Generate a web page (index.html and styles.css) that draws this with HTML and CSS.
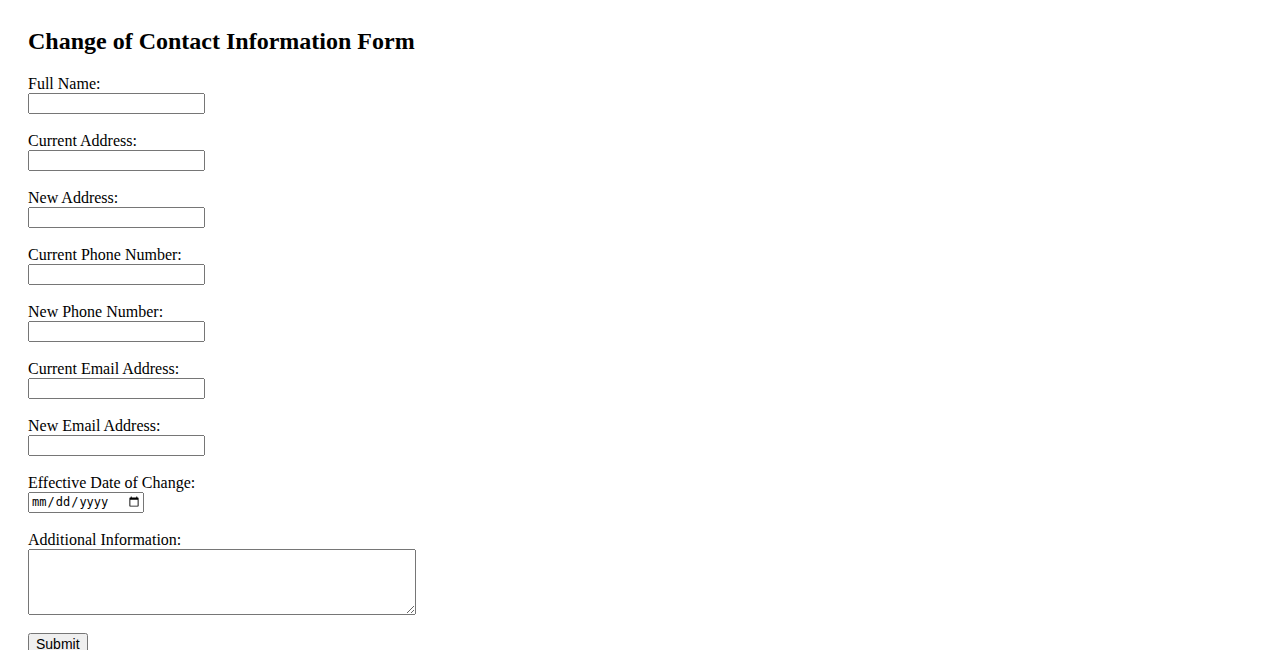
FILE: index.html
```html
<!DOCTYPE html>
<html lang="en">
<head>
    <title>Change of Contact Information Form</title>
    <link rel="stylesheet" href="styles.css">
</head>
<body>
    <h2>Change of Contact Information Form</h2>
    <form>
        <label for="fullName">Full Name:</label><br>
        <input type="text" id="fullName" name="fullName"><br><br>

        <label for="currentAddress">Current Address:</label><br>
        <input type="text" id="currentAddress" name="currentAddress"><br><br>

        <label for="newAddress">New Address:</label><br>
        <input type="text" id="newAddress" name="newAddress"><br><br>

        <label for="currentPhone">Current Phone Number:</label><br>
        <input type="text" id="currentPhone" name="currentPhone"><br><br>

        <label for="newPhone">New Phone Number:</label><br>
        <input type="text" id="newPhone" name="newPhone"><br><br>

        <label for="currentEmail">Current Email Address:</label><br>
        <input type="text" id="currentEmail" name="currentEmail"><br><br>

        <label for="newEmail">New Email Address:</label><br>
        <input type="text" id="newEmail" name="newEmail"><br><br>

        <label for="effectiveDate">Effective Date of Change:</label><br>
        <input type="date" id="effectiveDate" name="effectiveDate"><br><br>

        <label for="additionalInfo">Additional Information:</label><br>
        <textarea id="additionalInfo" name="additionalInfo" rows="4" cols="50"></textarea><br><br>

        <input type="submit" value="Submit">
    </form>
</body>
</html>
```

FILE: styles.css
```css
body {
    font-family: "Liberation Serif", "Times New Roman", serif;
    font-size: 16px;
    margin: 0;
    padding: 28px;
}
h2 {
    margin-top: 0;
}
form input[type="text"] {
    width: 177px;
    height: 21px;
    box-sizing: border-box;
}
form input[type="date"] {
    width: 116px;
    height: 21px;
    box-sizing: border-box;
    font-size: 12px;
}
form textarea {
    width: 388px;
    height: 66px;
    box-sizing: border-box;
    vertical-align: bottom;
}
form input[type="submit"] {
    font-family: "Liberation Sans", Arial, sans-serif;
    font-size: 14px;
}
```
